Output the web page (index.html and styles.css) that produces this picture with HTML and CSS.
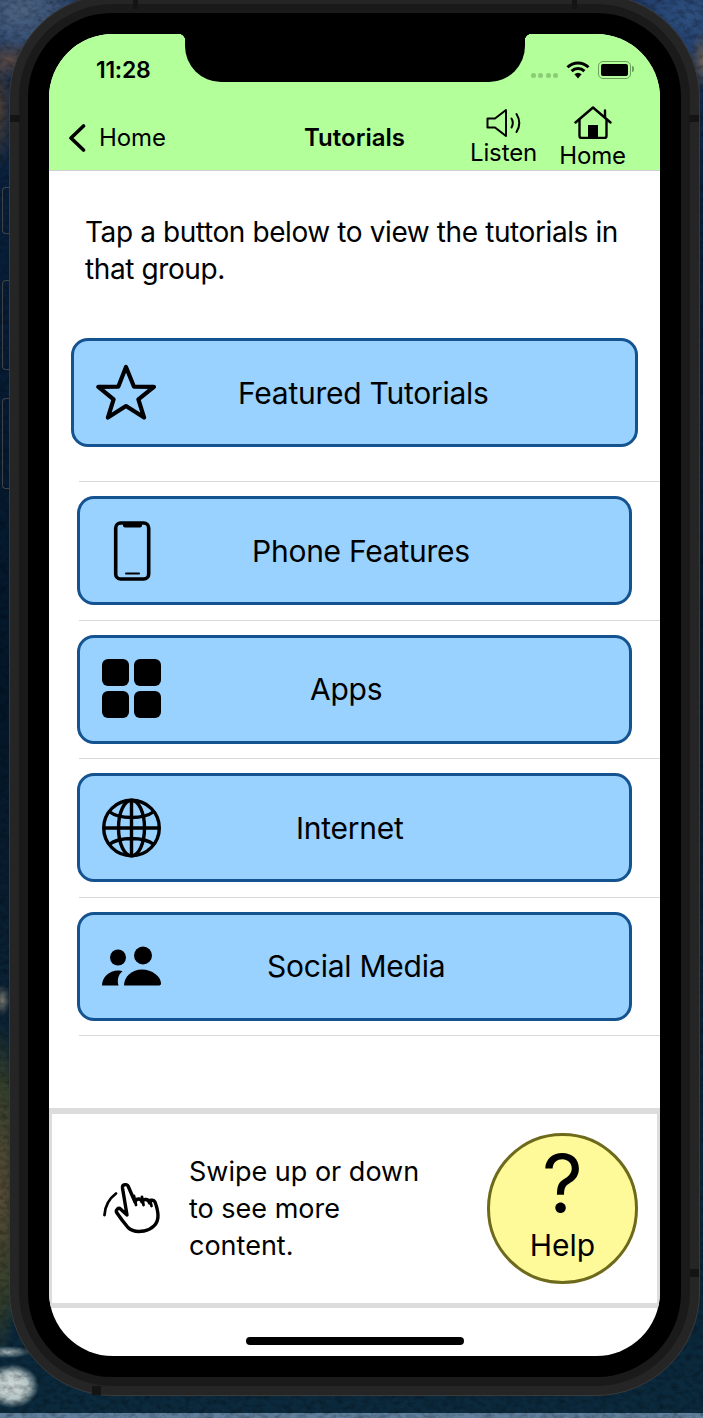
FILE: index.html
```html
<!DOCTYPE html>
<html lang="en">
<head>
	<meta charset="UTF-8">
	<title>Tutorials</title>
	<link rel="stylesheet" href="styles.css">
</head>
<body>
	<svg class="wallpaper" width="703" height="1418">
		<defs>
			<filter id="rock">
				<feTurbulence type="fractalNoise" baseFrequency="0.14 0.2" numOctaves="3" seed="7"/>
				<feColorMatrix type="matrix" values="0 0 0 0 0  0 0 0 0 0  0 0 0 0 0  1.8 0 0 0 -0.7"/>
			</filter>
		</defs>
		<rect width="703" height="1418" filter="url(#rock)"/>
	</svg>
	<i class="side-btn side-mute"></i>
	<i class="side-btn side-up"></i>
	<i class="side-btn side-down"></i>
	<div class="phone">
		<div class="band">
			<div class="bezel">
				<div class="screen">
					<div class="notch"></div>
					<header class="topbar">
						<div class="status">
							<span class="time">11:28</span>
							<div class="status-icons">
								<span class="dots"><i></i><i></i><i></i><i></i></span>
								<svg class="wifi" width="24" height="18" viewBox="0 0 24 18">
									<path d="M1.5 6.2a15 15 0 0 1 21 0" fill="none" stroke="#000" stroke-width="3"/>
									<path d="M5.6 10.2a9.2 9.2 0 0 1 12.8 0" fill="none" stroke="#000" stroke-width="3"/>
									<path d="M12 17.5l-3.6-4.2a5.4 5.4 0 0 1 7.2 0z"/>
								</svg>
								<span class="battery"><i></i></span>
							</div>
						</div>
						<nav class="nav">
							<a class="back">
								<svg width="20" height="28" viewBox="0 0 20 28"><path d="M16.5 2L4 14l12.5 12" fill="none" stroke="#000" stroke-width="3.6" stroke-linecap="round" stroke-linejoin="round"/></svg>
								<span>Home</span>
							</a>
							<h1 class="title">Tutorials</h1>
							<div class="actions">
								<a class="action action-listen">
									<svg width="36" height="30" viewBox="0 0 36 30">
										<path d="M1.5 10.5h7.500L20 2v26L9 19.500H1.500z" fill="none" stroke="#000" stroke-width="2" stroke-linejoin="round"/>
										<path d="M25.500 10.500a9 9 0 0 1 0 9M30.500 6a17 17 0 0 1 0 18" fill="none" stroke="#000" stroke-width="2" stroke-linecap="round"/>
									</svg>
									<span>Listen</span>
								</a>
								<a class="action action-home">
									<svg width="38" height="33" viewBox="0 0 38 33">
										<path d="M1.500 16.500L19 1.500l17.500 15" fill="none" stroke="#000" stroke-width="2.400" stroke-linecap="round" stroke-linejoin="round"/>
										<path d="M5.500 14v16a2 2 0 0 0 2 2h23a2 2 0 0 0 2-2V14M31 4.500v7" fill="none" stroke="#000" stroke-width="2.400" stroke-linecap="round"/>
										<rect x="14" y="19" width="10" height="13"/>
									</svg>
									<span>Home</span>
								</a>
							</div>
						</nav>
					</header>

					<main class="content">
						<p class="intro">Tap a button below to view the tutorials in that group.</p>
						<div class="featured-row">
							<a class="btn btn-featured">
								<svg class="btn-icon" width="60" height="60" viewBox="0 0 60 60">
									<path d="M30 4l8.300 20.500 21 .4-16.300 13L49 57 30 45 11 57l6-19.100L1 24.900l21-.4z" transform="translate(1.400 .2) scale(.953)" fill="none" stroke="#000" stroke-width="4.400" stroke-linejoin="round"/>
								</svg>
								<span class="label">Featured Tutorials</span>
							</a>
						</div>
						<div class="row">
							<a class="btn btn-phone">
								<svg class="btn-icon" width="60" height="60" viewBox="0 0 60 60">
									<rect x="13.700" y="2" width="33" height="56" rx="5" fill="none" stroke="#000" stroke-width="3.600"/>
									<path d="M21 2.500h19v2a2 2 0 0 1-2 2H23a2 2 0 0 1-2-2z"/>
									<path d="M24 52.500h13" stroke="#000" stroke-width="2" stroke-linecap="round"/>
								</svg>
								<span class="label">Phone Features</span>
							</a>
						</div>
						<div class="row">
							<a class="btn btn-apps">
								<svg class="btn-icon" width="60" height="60" viewBox="0 0 60 60">
									<rect x="0" y="0" width="27" height="27" rx="6"/>
									<rect x="32" y="0" width="27" height="27" rx="6"/>
									<rect x="0" y="32" width="27" height="27" rx="6"/>
									<rect x="32" y="32" width="27" height="27" rx="6"/>
								</svg>
								<span class="label">Apps</span>
							</a>
						</div>
						<div class="row">
							<a class="btn btn-internet">
								<svg class="btn-icon" width="60" height="60" viewBox="0 0 60 60">
									<g fill="none" stroke="#000" stroke-width="3.400">
										<circle cx="29.500" cy="30" r="27.800"/>
										<ellipse cx="29.500" cy="30" rx="13" ry="27.800"/>
										<path d="M29.500 2v56M1.500 30h56M7 13.500c6 4.500 14 6 22.500 6s16.500-1.500 22.500-6M7 46.500c6-4.500 14-6 22.500-6s16.500 1.500 22.500 6"/>
									</g>
								</svg>
								<span class="label">Internet</span>
							</a>
						</div>
						<div class="row">
							<a class="btn btn-social">
								<svg class="btn-icon" width="60" height="60" viewBox="0 0 60 60">
									<circle cx="41" cy="19.500" r="9"/>
									<circle cx="16" cy="21.500" r="8"/>
									<path d="M22 49.500c0-9 8-16 18-16s19 7 19 14c0 1.500-1 2-2.500 2z"/>
									<path d="M0 49.500c0-8 7-15 16-15 2 0 3.500.3 4.500.8C16 39 15 44.500 16.500 49.500z"/>
								</svg>
								<span class="label">Social Media</span>
							</a>
						</div>
					</main>

					<footer class="swipe">
						<svg class="hand" width="62" height="56" viewBox="0 0 62 56">
							<g fill="none" stroke="#000" stroke-linecap="round" stroke-linejoin="round">
								<path d="M3.500 34C4 25 9 17 15 12.500" stroke-width="2.800"/>
								<path d="M26 34L19.500 28c-2-2-5.500 1-3.500 4 4 6 8 11 11 14.500 4 4 10 4.500 16 3.500 8-1.500 14-7 14-15 0-5-1.500-10-3-14-1.500-3-5.500-2-5.500 1-.5-4-6-5-7.500-1-.5-4-6-4-7 0L27.500 6c-1-3.500-6.500-3-6 1z" stroke-width="3.400"/>
								<path d="M33 15l2 9M41 16l1.500 8M49 19l1.500 6" stroke-width="2.800"/>
							</g>
						</svg>
						<p class="swipe-text">Swipe up or down to see more content.</p>
						<a class="help">
							<span class="help-mark">?</span>
							<span class="help-label">Help</span>
						</a>
					</footer>

					<div class="home-area"><div class="home-bar"></div></div>
				</div>
			</div>
		</div>
		<i class="antenna ant-top-l"></i>
		<i class="antenna ant-top-r"></i>
		<i class="antenna ant-side-l"></i>
		<i class="antenna ant-side-r"></i>
		<i class="antenna ant-low-l"></i>
		<i class="antenna ant-low-r"></i>
	</div>
</body>
</html>
```

FILE: styles.css
```css
*{
	margin: 0;
	padding: 0;
	box-sizing: border-box;
}
html,body{
	height: 1418px;
	overflow: hidden;
}
body{
	position: relative;
	font-family: Inter, "Liberation Sans", sans-serif;
	color: #000;
	background:
		linear-gradient(#5f7f9c,#5f7f9c) left bottom/100% 5px no-repeat,
		radial-gradient(ellipse 27px 22px at 12px 1386px,#d5dddc 0,#b4c4c5 60%,transparent 100%),
		radial-gradient(ellipse 24px 6px at 8px 1352px,#a9b8ba 0,transparent 100%),
		radial-gradient(ellipse 9px 16px at 2px 1000px,#77776e 0,transparent 100%),
		radial-gradient(ellipse 24px 170px at 0 1190px,#5a4c38 0,#343f2c 65%,transparent 100%),
		radial-gradient(ellipse 40px 20px at 10px 60px,#5d4c48 0,transparent 100%),
		radial-gradient(ellipse 14px 60px at 0 110px,#4a3e36 0,transparent 100%),
		radial-gradient(ellipse 60px 45px at 20px 10px,#4d6583 0,#364f74 70%,transparent 100%),
		radial-gradient(ellipse 14px 30px at 703px 60px,#6d6058 0,transparent 100%),
		radial-gradient(ellipse 70px 50px at 690px 15px,#2f5181 0,#233f6b 70%,transparent 100%),
		linear-gradient(#1a3358 0,#081f3a 200px,#041729 700px,#0a2033 960px,#0b2a3d 1418px);
}
.wallpaper{
	position: absolute;
	left: 0;
	top: 0;
	opacity: .35;
}
i{
	display: block;
}

/* device frame */
.phone{
	position: relative;
	width: 691px;
	height: 1402px;
	margin: -6px 0 0 9px;
	padding: 9px;
	background-color: #252525;
	border: 1px solid #3a3a3a;
	border-radius: 104px;
}
.band{
	height: 100%;
	padding: 9px;
	background-color: #1a1a1a;
	border-radius: 94px;
}
.bezel{
	height: 100%;
	padding: 21px;
	background-color: #000;
	border-radius: 84px;
}
.screen{
	position: relative;
	display: flex;
	flex-direction: column;
	height: 100%;
	background-color: #fff;
	border-radius: 64px;
	overflow: hidden;
}
.side-btn{
	position: absolute;
	left: 2px;
	width: 8px;
	border: 1px solid #3f4347;
	border-right: 0;
	border-radius: 4px 0 0 4px;
}
.side-mute{
	top: 187px;
	height: 47px;
}
.side-up{
	top: 280px;
	height: 90px;
}
.side-down{
	top: 398px;
	height: 91px;
}
.antenna{
	position: absolute;
	background-color: #141414;
}
.ant-top-l,.ant-top-r{
	top: 0;
	width: 5px;
	height: 14px;
}
.ant-top-l{
	left: 123px;
}
.ant-top-r{
	left: 562px;
}
.ant-side-l,.ant-side-r{
	top: 120px;
	width: 10px;
	height: 7px;
}
.ant-side-l{
	left: 0;
}
.ant-side-r{
	right: 0;
}
.ant-low-l,.ant-low-r{
	bottom: 0;
	width: 9px;
	height: 9px;
}
.ant-low-l{
	left: 82px;
}
.ant-low-r{
	right: 0;
	bottom: 118px;
	height: 8px;
}

/* notch */
.notch{
	position: absolute;
	left: 136px;
	top: 0;
	width: 340px;
	height: 48px;
	background-color: #000;
	border-radius: 0 0 36px 36px;
	z-index: 2;
}
.notch::before,.notch::after{
	content: "";
	position: absolute;
	top: 0;
	width: 7px;
	height: 7px;
}
.notch::before{
	left: -7px;
	background: radial-gradient(circle at 0 100%,transparent 7px,#000 7.500px);
}
.notch::after{
	right: -7px;
	background: radial-gradient(circle at 100% 100%,transparent 7px,#000 7.500px);
}

/* top bar */
.topbar{
	height: 137px;
	background-color: #b3ff99;
	border-bottom: 1px solid #cfcfcf;
}
.status{
	display: flex;
	justify-content: space-between;
	align-items: center;
	height: 72px;
	padding: 0 29px 0 47px;
}
.time{
	font-size: 23px;
	font-weight: 600;
	letter-spacing: -.3px;
}
.status-icons{
	display: flex;
	align-items: center;
	gap: 8px;
}
.dots{
	display: flex;
	gap: 2.500px;
	margin: 10px 0 0 0;
}
.dots i{
	width: 5px;
	height: 5px;
	border-radius: 50%;
	background-color: #8ccc77;
}
.battery{
	position: relative;
	width: 33px;
	height: 18px;
	padding: 2px;
	border: 1.500px solid #6da05c;
	border-radius: 5px;
}
.battery i{
	height: 100%;
	background-color: #000;
	border-radius: 2px;
}
.battery::after{
	content: "";
	position: absolute;
	right: -4px;
	top: 4px;
	width: 2px;
	height: 6px;
	background-color: #6da05c;
	border-radius: 0 2px 2px 0;
}
.nav{
	display: grid;
	grid-template-columns: 1fr auto 1fr;
	align-items: start;
	height: 60px;
	padding: 0 34px 0 18px;
}
.back{
	display: flex;
	align-items: center;
	gap: 12px;
	margin-top: 17px;
	font-size: 24px;
	letter-spacing: -.1px;
}
.title{
	margin-top: 17px;
	font-size: 24px;
	font-weight: 600;
	position: relative;
	left: 8px;
}
.actions{
	display: flex;
	justify-content: flex-end;
	gap: 22px;
}
.action{
	display: flex;
	flex-direction: column;
	align-items: center;
	font-size: 24px;
	line-height: 28px;
	letter-spacing: -.1px;
}
.action svg{
	display: block;
}
.action-listen{
	padding-top: 2px;
}
.action-listen svg{
	margin: 0 0 1px 0;
}
.action-home svg{
	margin-bottom: 3px;
}

/* main list */
.content{
	flex: 1;
	padding-top: 43px;
}
.intro{
	padding: 0 36px;
	font-size: 28px;
	line-height: 37px;
	letter-spacing: -.4px;
}
.featured-row{
	margin: 50px 0 0 30px;
	height: 144px;
	border-bottom: 1px solid #d9d9d9;
}
.row{
	display: flex;
	align-items: center;
	height: 138.500px;
	margin-left: 30px;
	border-bottom: 1px solid #d9d9d9;
}
.btn{
	display: flex;
	align-items: center;
	width: 555px;
	height: 109px;
	margin-left: -2px;
	padding-left: 22px;
	background-color: #99d1ff;
	border: 3px solid #14538f;
	border-radius: 17px;
	font-size: 30px;
	letter-spacing: -.25px;
}
.btn-icon{
	flex: none;
}
.btn-featured{
	width: 567px;
	margin-left: -8px;
}
.btn-phone .label{
	margin-left: 90px;
}
.btn-apps .label{
	margin-left: 148px;
}
.btn-internet .label{
	margin-left: 134px;
}
.btn-social .label{
	margin-left: 105px;
}
.btn-featured .label{
	margin-left: 82px;
}

/* footer */
.swipe{
	display: flex;
	align-items: center;
	height: 200px;
	padding: 0 19px 0 49px;
	border: solid #dcdcdc;
	border-width: 6px 3px 5px;
}
.hand{
	flex: none;
}
.swipe-text{
	width: 240px;
	margin-left: 26px;
	font-size: 27px;
	line-height: 37px;
}
.help{
	display: flex;
	flex-direction: column;
	align-items: center;
	flex: none;
	width: 151px;
	height: 151px;
	margin-left: auto;
	background-color: #fffa99;
	border: 3px solid #6e6a1c;
	border-radius: 50%;
}
.help-mark{
	font-size: 80px;
	font-weight: 400;
	line-height: 84px;
	margin-top: 5px;
}
.help-label{
	font-size: 30px;
	line-height: 36px;
	margin-top: 2px;
}
.home-area{
	height: 48px;
	padding-top: 29px;
}
.home-bar{
	width: 218px;
	height: 8px;
	margin: 0 auto;
	background-color: #000;
	border-radius: 4px;
}
```
